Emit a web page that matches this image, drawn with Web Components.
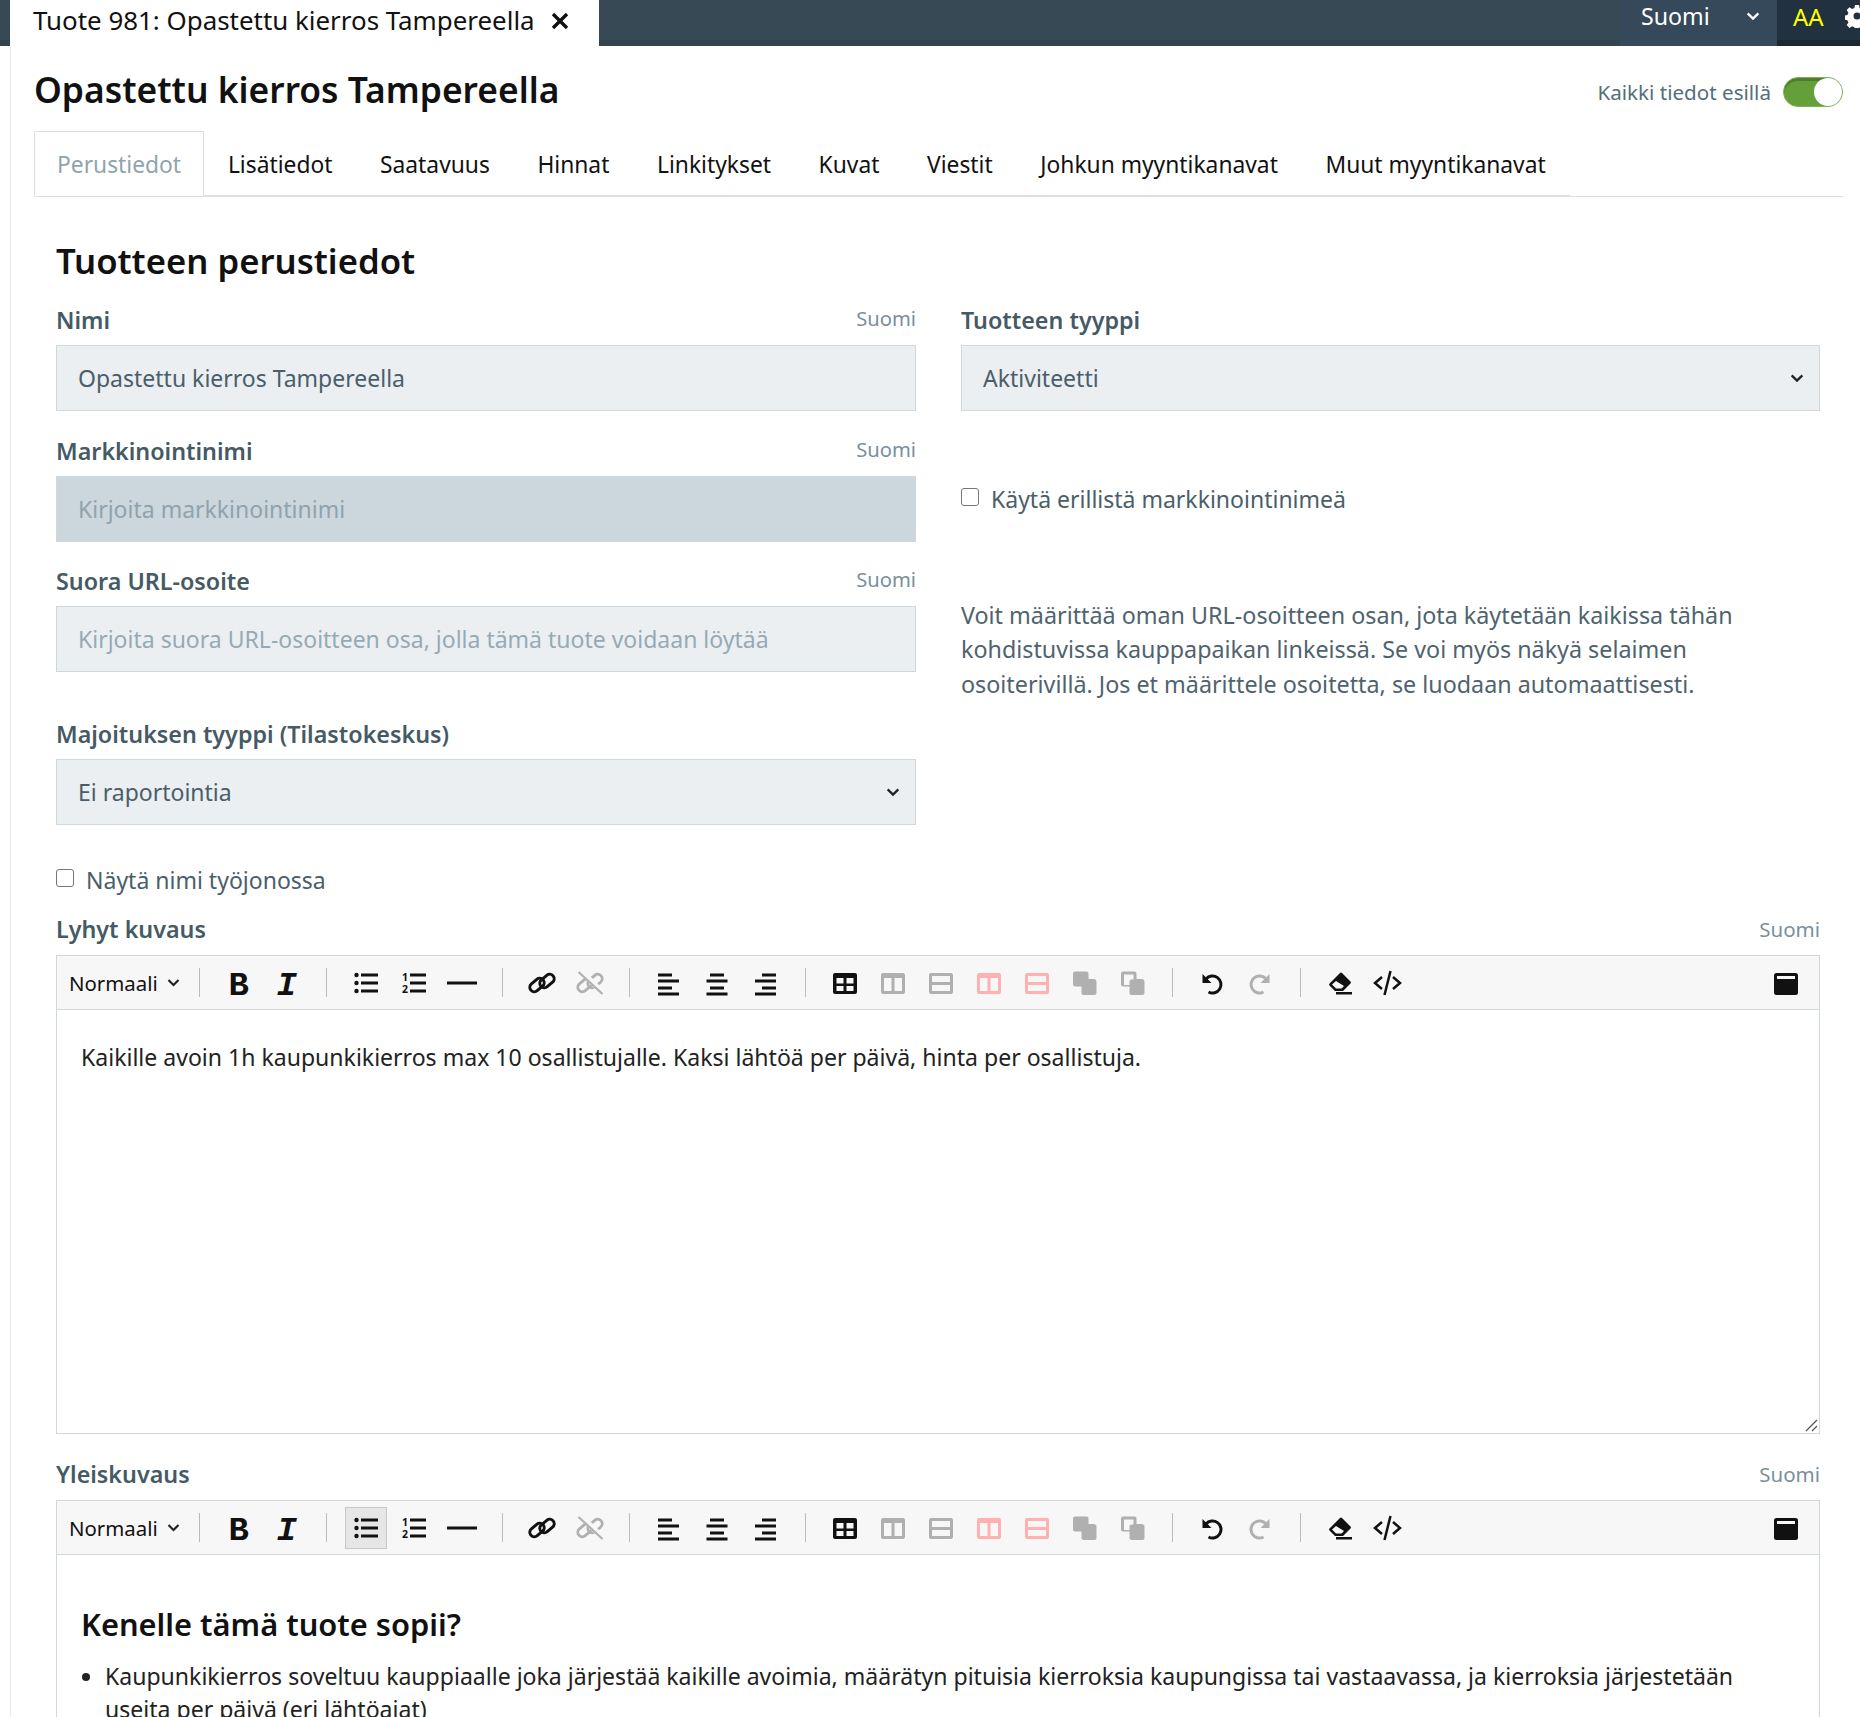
<!DOCTYPE html>
<html lang="fi">
<head>
<meta charset="utf-8">
<title>Tuote 981</title>
<style>
  html, body { margin: 0; height: 1717px; overflow: hidden; background: #fff; }
  body { font-family: "Noto Sans", sans-serif; font-size: 20px; color: #4a5e6a; }
</style>
</head>
<body>
<app-topbar title-text="Tuote 981: Opastettu kierros Tampereella"></app-topbar>
<product-page></product-page>

<script>
const LINK = `<rect x="-1" y="9.500" width="16" height="9" rx="4.500" transform="rotate(-40 7 14)"/><rect x="9" y="5.500" width="16" height="9" rx="4.500" transform="rotate(-40 17 10)"/>`;

// toolbar icons, 24 box
const ICONS = {
  ul: `<circle cx="2.500" cy="4" r="2.200"/><circle cx="2.500" cy="12" r="2.200"/><circle cx="2.500" cy="20" r="2.200"/><path d="M7 2.500h17v3H7zM7 10.500h17v3H7zM7 18.500h17v3H7z"/>`,
  ol: `<text x="0" y="10" font-size="10.500" font-weight="700" font-family="Noto Sans">1</text><text x="0" y="22" font-size="10.500" font-weight="700" font-family="Noto Sans">2</text><path d="M8 2.500h16v3H8zM8 10.500h16v3H8zM8 18.500h16v3H8z"/>`,
  hr: `<path d="M-3 10.500h30v3H-3z"/>`,
  link: `<g fill="none" stroke="currentColor" stroke-width="3">${LINK}</g>`,
  unlink: `<g fill="none" stroke="currentColor" stroke-width="2.800">${LINK}</g><path d="M3.500 0.500l22 22" stroke="#f7f7f7" stroke-width="5.500"/><path d="M0.500 1l24 22" stroke="currentColor" stroke-width="2.200"/>`,
  left: `<path d="M1 2.500h14v3H1zM1 8.500h21v3H1zM1 15.500h14v3H1zM1 21.500h21v3H1z"/>`,
  center: `<path d="M5 2.500h14v3H5zM1.500 8.500h21v3h-21zM5 15.500h14v3H5zM1.500 21.500h21v3h-21z"/>`,
  right: `<path d="M9 2.500h14v3H9zM2 8.500h21v3H2zM9 15.500h14v3H9zM2 21.500h21v3H2z"/>`,
  table: `<path fill-rule="evenodd" d="M2 2h20a2 2 0 0 1 2 2v17a2 2 0 0 1-2 2H2a2 2 0 0 1-2-2V4a2 2 0 0 1 2-2zM3.500 7v5.500h7V7zM13.500 7v5.500h7V7zM3.500 15v5h7v-5zM13.500 15v5h7v-5z"/>`,
  cols: `<path fill-rule="evenodd" d="M2 2h20a2 2 0 0 1 2 2v17a2 2 0 0 1-2 2H2a2 2 0 0 1-2-2V4a2 2 0 0 1 2-2zM3 7v13h7.500V7zM13.500 7v13H21V7z"/>`,
  rows: `<path fill-rule="evenodd" d="M2 2h20a2 2 0 0 1 2 2v17a2 2 0 0 1-2 2H2a2 2 0 0 1-2-2V4a2 2 0 0 1 2-2zM3 5v6h18V5zM3 14v6h18v-6z"/>`,
  merge: `<path d="M2 0.500h11.500a2 2 0 0 1 2 2v5.500h5a3 3 0 0 1 3 3v11a2 2 0 0 1-2 2H10.500a2 2 0 0 1-2-2v-6.500H2a2 2 0 0 1-2-2V2.500a2 2 0 0 1 2-2z"/>`,
  split: `<path fill-rule="evenodd" d="M2 0.500h11.500a2 2 0 0 1 2 2v5.500h5a3 3 0 0 1 3 3v11a2 2 0 0 1-2 2H10.500a2 2 0 0 1-2-2v-6.500H2a2 2 0 0 1-2-2V2.500a2 2 0 0 1 2-2zM3 3.500v10.500h5.500v-3.500a2 2 0 0 1 2-2h2V3.500z"/>`,
  undo: `<path d="M6 8A8.500 8.500 0 1 1 8.500 21" fill="none" stroke="currentColor" stroke-width="3"/><path d="M2.500 3v9h9z"/>`,
  redo: `<path d="M18 8A8.500 8.500 0 1 0 15.500 21" fill="none" stroke="currentColor" stroke-width="3"/><path d="M21.500 3v9h-9z"/>`,
  eraser: `<path fill-rule="evenodd" d="M14 2l8.500 8.500a1.500 1.500 0 0 1 0 2L15 20H7l-5.500-5.500a1.500 1.500 0 0 1 0-2L12 2a1.500 1.500 0 0 1 2 0zM8 10l-4 3.500 4 4h5.500l2.500-2.500z"/><path d="M8 21h16v2.500H8z"/>`,
  full: `<path fill-rule="evenodd" d="M2.500 2h19A2.500 2.500 0 0 1 24 4.500v17a2.500 2.500 0 0 1-2.500 2.500h-19A2.500 2.500 0 0 1 0 21.500v-17A2.500 2.500 0 0 1 2.500 2zM3 5v3h18V5z"/>`,
};

const chevron = (w, stroke) => `<svg width="${w}" height="${w}" viewBox="0 0 12 12" fill="none" stroke="${stroke}" stroke-width="1.700"><path d="M2 4l4 4 4-4"/></svg>`;

class AppTopbar extends HTMLElement {
  connectedCallback() {
    this.attachShadow({ mode: 'open' });
    this.shadowRoot.innerHTML = `
      <style>
        :host { display: flex; height: 46px; background: #384956; box-shadow: inset 0 -6px 0 #33434f; color: #fff; overflow: hidden; }
        .tab { margin-left: 10px; width: 589px; box-sizing: border-box; background: #fff; color: #111; display: flex; align-items: center; padding: 0 0 6px 23px; font-size: 25.900px; height: 46px; }
        .tab svg { margin-left: 15px; margin-top: 2px; }
        .grow { flex: 1; }
        .lang { width: 157px; box-sizing: border-box; background: #35495a; box-shadow: inset 0 -6px 0 #35495a; display: flex; align-items: center; justify-content: space-between; padding: 0 16px 14px 21px; font-size: 23.200px; }
        .aa { width: 83px; box-sizing: border-box; background: #21313f; box-shadow: inset 0 -6px 0 #1b2934; display: flex; gap: 21px; padding: 0 0 14px 16px; align-items: center; color: #ffff00; font-size: 24px; }
      </style>
      <div class="tab"><span>${this.getAttribute('title-text')}</span>
        <svg width="20" height="20" viewBox="0 0 20 20" stroke="#111" stroke-width="3.400"><path d="M3 3l14 14M17 3L3 17"/></svg></div>
      <div class="grow"></div>
      <div class="lang"><span>Suomi</span>${chevron(16, '#fff')}</div>
      <div class="aa"><span>AA</span>
        <svg style="flex:none" width="24" height="24" viewBox="0 0 24 24" fill="#fff"><path fill-rule="evenodd" d="M10 1h4l.6 3 2.300 1 2.600-1.700 2.800 2.800-1.700 2.600 1 2.300 3 .6v4l-3 .6-1 2.300 1.700 2.600-2.800 2.800-2.600-1.700-2.300 1-.6 3h-4l-.6-3-2.300-1-2.600 1.700-2.800-2.800 1.700-2.600-1-2.300-3-.6v-4l3-.6 1-2.300L1.700 6.100l2.800-2.800 2.600 1.700 2.300-1zM12 8.500a3.500 3.500 0 1 0 0 7 3.500 3.500 0 0 0 0-7z"/></svg>
      </div>`;
  }
}
customElements.define('app-topbar', AppTopbar);

class TabBar extends HTMLElement {
  connectedCallback() {
    const items = ['Perustiedot', 'Lisätiedot', 'Saatavuus', 'Hinnat', 'Linkitykset', 'Kuvat', 'Viestit', 'Johkun myyntikanavat', 'Muut myyntikanavat'];
    this.attachShadow({ mode: 'open' });
    this.shadowRoot.innerHTML = `
      <style>
        :host { display: flex; height: 66px; box-shadow: inset 0 -1px 0 #dcdfe1; font-size: 22.800px; color: #111; }
        a { display: block; box-sizing: border-box; height: 66px; line-height: 68px; padding: 0 23.800px; border-bottom: 2px solid #dcdfe1; }
        a.on { color: #90a4ae; border: 1px solid #dcdfe1; border-bottom: 0; line-height: 66px; padding: 0 22px; }
      </style>
      ${items.map((t, i) => `<a class="${i ? '' : 'on'}">${t}</a>`).join('')}`;
  }
}
customElements.define('tab-bar', TabBar);

class FormField extends HTMLElement {
  connectedCallback() {
    const lang = this.getAttribute('lang-hint');
    this.attachShadow({ mode: 'open' });
    this.shadowRoot.innerHTML = `
      <style>
        :host { display: block; }
        .head { display: flex; justify-content: space-between; align-items: flex-end; height: 29px; margin-bottom: 10px; }
        label { font-weight: 600; font-size: 23.300px; color: #455a64; line-height: 29px; }
        small { font-size: 20.200px; color: #78909c; line-height: 29px; position: relative; top: -2px; }
        .box { box-sizing: border-box; height: 66px; border: 1px solid #cfd8dc; background: #ebeff2; display: flex; align-items: center; justify-content: space-between; padding: 0 14px 0 21px; font-size: 23px; }
        :host([placeholder]) .box { color: #96aab5; }
        :host([tone=dark]) .box { background: #ccd6dd; color: #8fa3ad; }
      </style>
      <div class="head"><label>${this.getAttribute('label')}</label>${lang ? `<small>${lang}</small>` : ''}</div>
      <div class="box"><span><slot></slot></span>${this.hasAttribute('select') ? chevron(16, '#222') : ''}</div>`;
  }
}
customElements.define('form-field', FormField);

class CheckRow extends HTMLElement {
  connectedCallback() {
    this.attachShadow({ mode: 'open' });
    this.shadowRoot.innerHTML = `
      <style>
        :host { display: flex; align-items: center; gap: 12px; font-size: 23px; height: 34px; }
        i { width: 18px; height: 18px; border: 1.500px solid #767676; border-radius: 3px; background: #fff; box-sizing: border-box; margin-bottom: 4px; }
      </style>
      <i></i><span><slot></slot></span>`;
  }
}
customElements.define('check-row', CheckRow);

class RichEditor extends HTMLElement {
  connectedCallback() {
    const active = this.getAttribute('active');
    const btn = (name, cls = '') => `<button class="${cls}${name === active ? ' active' : ''}"><svg width="24" height="24" viewBox="0 0 24 24" fill="currentColor">${ICONS[name]}</svg></button>`;
    this.attachShadow({ mode: 'open' });
    this.shadowRoot.innerHTML = `
      <style>
        :host { display: block; }
        .head { display: flex; justify-content: space-between; align-items: flex-end; height: 29px; margin-bottom: 11px; }
        label { font-weight: 600; font-size: 23.300px; color: #455a64; line-height: 29px; }
        small { font-size: 20.500px; color: #78909c; line-height: 29px; }
        .bar { display: flex; align-items: center; height: 55px; box-sizing: border-box; border: 1px solid #cfd8dc; background: #f7f7f7; padding-left: 12px; color: #111; }
        .style { display: flex; align-items: center; gap: 8px; font-size: 20.400px; width: 118px; flex: none; }
        .sep { width: 1px; height: 29px; background: #bbb; margin: 0 15px 0 15.500px; flex: none; }
        .sep.first { margin-left: 12px; margin-right: 14.700px; }
        button { all: unset; box-sizing: border-box; width: 42px; height: 42px; margin: 0 3px; display: flex; align-items: center; justify-content: center; color: #111; flex: none; overflow: visible; }
        button svg { overflow: visible; }
        button.active { background: #e6e6e6; border: 1px solid #c8c8c8; }
        button.off { color: #b0b0b0; }
        button.pink { color: #ffb0b0; }
        button.glyph { font-family: "Liberation Mono", monospace; font-size: 34px; font-weight: 700; padding-top: 7px; }
        .fill { flex: 1; }
        .body { position: relative; box-sizing: border-box; height: 424px; border: 1px solid #cfd8dc; border-top: 0; padding: 31px 24px; color: #222; font-size: 23.050px; line-height: 33px; }
        .grip { position: absolute; right: 1px; bottom: 1px; }
      </style>
      <div class="head"><label>${this.getAttribute('label')}</label><small>Suomi</small></div>
      <div class="bar">
        <div class="style"><span>Normaali</span>${chevron(15, '#222')}</div><span class="sep first"></span>
        <button class="glyph">B</button><button class="glyph" style="font-style:italic">I</button><span class="sep"></span>
        ${btn('ul')}${btn('ol')}${btn('hr')}<span class="sep"></span>
        ${btn('link')}${btn('unlink', 'off')}<span class="sep"></span>
        ${btn('left')}${btn('center')}${btn('right')}<span class="sep"></span>
        ${btn('table')}${btn('cols', 'off')}${btn('rows', 'off')}${btn('cols', 'pink')}${btn('rows', 'pink')}${btn('merge', 'off')}${btn('split', 'off')}<span class="sep"></span>
        ${btn('undo')}${btn('redo', 'off')}<span class="sep"></span>
        ${btn('eraser')}<button><svg width="31" height="24" viewBox="0 0 31 24" fill="none" stroke="currentColor" stroke-width="2.500"><path d="M10 6l-7 6 7 6M21 6l7 6-7 6M18.500 0l-6 24"/></svg></button>
        <div class="fill"></div>
        ${btn('full')}<span style="width:9px;flex:none"></span>
      </div>
      <div class="body"><slot></slot>${this.hasAttribute('grip') ? `<svg class="grip" width="14" height="14" viewBox="0 0 14 14" stroke="#555" stroke-width="1.300"><path d="M2 13L13 2M8 13l5-5"/></svg>` : ''}</div>`;
  }
}
customElements.define('rich-editor', RichEditor);

class ProductPage extends HTMLElement {
  connectedCallback() {
    this.attachShadow({ mode: 'open' });
    this.shadowRoot.innerHTML = `
      <style>
        :host { display: block; margin-left: 10px; border-left: 1px solid #e4e8ea; padding: 0 17px 0 23px; height: 1671px; overflow: hidden; }
        .title { display: flex; justify-content: space-between; align-items: center; height: 85px; }
        h1 { margin: 0; font-size: 35.400px; font-weight: 600; color: #111; }
        .switch { display: flex; align-items: center; gap: 12px; font-size: 20.600px; color: #546e7a; padding-top: 7px; }
        .toggle { width: 60px; height: 30px; box-sizing: border-box; border-radius: 15px; background: #659f3a; border: 1px solid #7cb550; box-shadow: inset 0 3px 0 #4f7d2d; display: flex; justify-content: flex-end; }
        .toggle i { width: 28px; height: 28px; border-radius: 50%; background: #fff; }
        .content { padding: 0 23px 0 22px; }
        h2 { margin: 41px 0 22px; font-size: 34.700px; line-height: 46px; font-weight: 600; color: #111; }
        .cols { display: grid; grid-template-columns: 860px 859px; column-gap: 45px; }
        .stack { display: flex; flex-direction: column; }
        .note { margin: 0; width: 800px; font-size: 23.300px; line-height: 34.400px; color: #4f636e; }
        h3 { margin: 18px 0 16px; font-size: 30.800px; line-height: 40px; font-weight: 600; color: #111; }
        ul { margin: 0; padding-left: 24px; }
      </style>
      <div class="title"><h1>Opastettu kierros Tampereella</h1>
        <div class="switch"><span>Kaikki tiedot esillä</span><div class="toggle"><i></i></div></div></div>
      <tab-bar></tab-bar>
      <div class="content">
        <h2>Tuotteen perustiedot</h2>
        <div class="cols">
          <div class="stack">
            <form-field label="Nimi" lang-hint="Suomi">Opastettu kierros Tampereella</form-field>
            <form-field label="Markkinointinimi" lang-hint="Suomi" tone="dark" placeholder style="margin-top:26px">Kirjoita markkinointinimi</form-field>
            <form-field label="Suora URL-osoite" lang-hint="Suomi" placeholder style="margin-top:25px">Kirjoita suora URL-osoitteen osa, jolla tämä tuote voidaan löytää</form-field>
            <form-field label="Majoituksen tyyppi (Tilastokeskus)" select style="margin-top:48px">Ei raportointia</form-field>
          </div>
          <div class="stack">
            <form-field label="Tuotteen tyyppi" select>Aktiviteetti</form-field>
            <check-row style="margin-top:71px">Käytä erillistä markkinointinimeä</check-row>
            <p class="note" style="margin-top:82px">Voit määrittää oman URL-osoitteen osan, jota käytetään kaikissa tähän kohdistuvissa kauppapaikan linkeissä. Se voi myös näkyä selaimen osoiterivillä. Jos et määrittele osoitetta, se luodaan automaattisesti.</p>
          </div>
        </div>
        <check-row style="margin-top:38px">Näytä nimi työjonossa</check-row>
        <rich-editor label="Lyhyt kuvaus" grip style="margin-top:18px">Kaikille avoin 1h kaupunkikierros max 10 osallistujalle. Kaksi lähtöä per päivä, hinta per osallistuja.</rich-editor>
        <rich-editor label="Yleiskuvaus" active="ul" style="margin-top:26px">
          <h3>Kenelle tämä tuote sopii?</h3>
          <ul><li>Kaupunkikierros soveltuu kauppiaalle joka järjestää kaikille avoimia, määrätyn pituisia kierroksia kaupungissa tai vastaavassa, ja kierroksia järjestetään useita per päivä (eri lähtöajat)</li></ul>
        </rich-editor>
      </div>`;
  }
}
customElements.define('product-page', ProductPage);
</script>
</body>
</html>
